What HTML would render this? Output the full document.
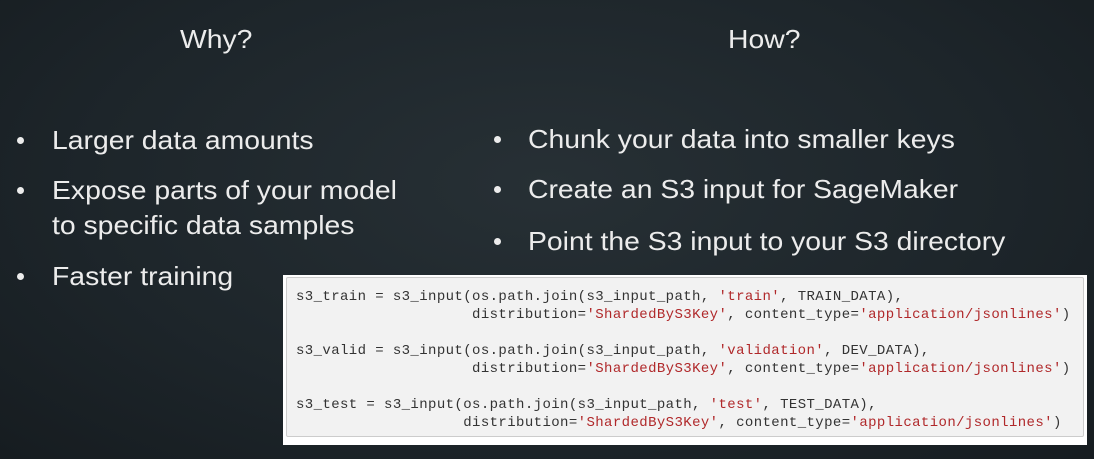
<!DOCTYPE html>
<html><head><meta charset="utf-8"><style>
html,body{margin:0;padding:0}
body{width:1094px;height:459px;overflow:hidden;position:relative;
background:radial-gradient(ellipse at 50% 40%,#273035 0%,#1d252a 60%,#161c20 100%);
font-family:"Liberation Sans",sans-serif;color:#ececec}
.t{position:absolute;white-space:nowrap;font-size:26px;line-height:30px;transform:scaleX(1.09);transform-origin:0 50%}
.dot{position:absolute;width:7px;height:7px;border-radius:50%;background:#ececec}
.box{position:absolute;left:283px;top:275px;width:804px;height:170px;background:#fff}
.panel{position:absolute;left:3px;top:2px;width:796px;height:158px;background:#f2f2f2;border:1px solid #ccc;border-radius:2px}
.c{position:absolute;left:9px;white-space:pre;font-family:"Liberation Mono",monospace;font-size:14px;letter-spacing:0.4px;line-height:18px;color:#333}
.s{color:#b0282a}
</style></head><body>
<div class="t" style="left:180px;top:24px">Why?</div>
<div class="t" style="left:728px;top:24px">How?</div>

<div class="dot" style="left:17px;top:137px"></div>
<div class="t" style="left:52px;top:125px">Larger data amounts</div>
<div class="dot" style="left:17px;top:187px"></div>
<div class="t" style="left:52px;top:175px">Expose parts of your model</div>
<div class="t" style="left:52px;top:210px">to specific data samples</div>
<div class="dot" style="left:17px;top:273px"></div>
<div class="t" style="left:52px;top:261px">Faster training</div>

<div class="dot" style="left:494px;top:136px"></div>
<div class="t" style="left:528px;top:124px">Chunk your data into smaller keys</div>
<div class="dot" style="left:494px;top:186px"></div>
<div class="t" style="left:528px;top:174px">Create an S3 input for SageMaker</div>
<div class="dot" style="left:494px;top:238px"></div>
<div class="t" style="left:528px;top:226px">Point the S3 input to your S3 directory</div>

<div class="box"><div class="panel">
<div class="c" style="top:10px">s3_train = s3_input(os.path.join(s3_input_path, <span class="s">'train'</span>, TRAIN_DATA),
                    distribution=<span class="s">'ShardedByS3Key'</span>, content_type=<span class="s">'application/jsonlines'</span>)</div>
<div class="c" style="top:64px">s3_valid = s3_input(os.path.join(s3_input_path, <span class="s">'validation'</span>, DEV_DATA),
                    distribution=<span class="s">'ShardedByS3Key'</span>, content_type=<span class="s">'application/jsonlines'</span>)</div>
<div class="c" style="top:118px">s3_test = s3_input(os.path.join(s3_input_path, <span class="s">'test'</span>, TEST_DATA),
                   distribution=<span class="s">'ShardedByS3Key'</span>, content_type=<span class="s">'application/jsonlines'</span>)</div>
</div></div>
</body></html>
